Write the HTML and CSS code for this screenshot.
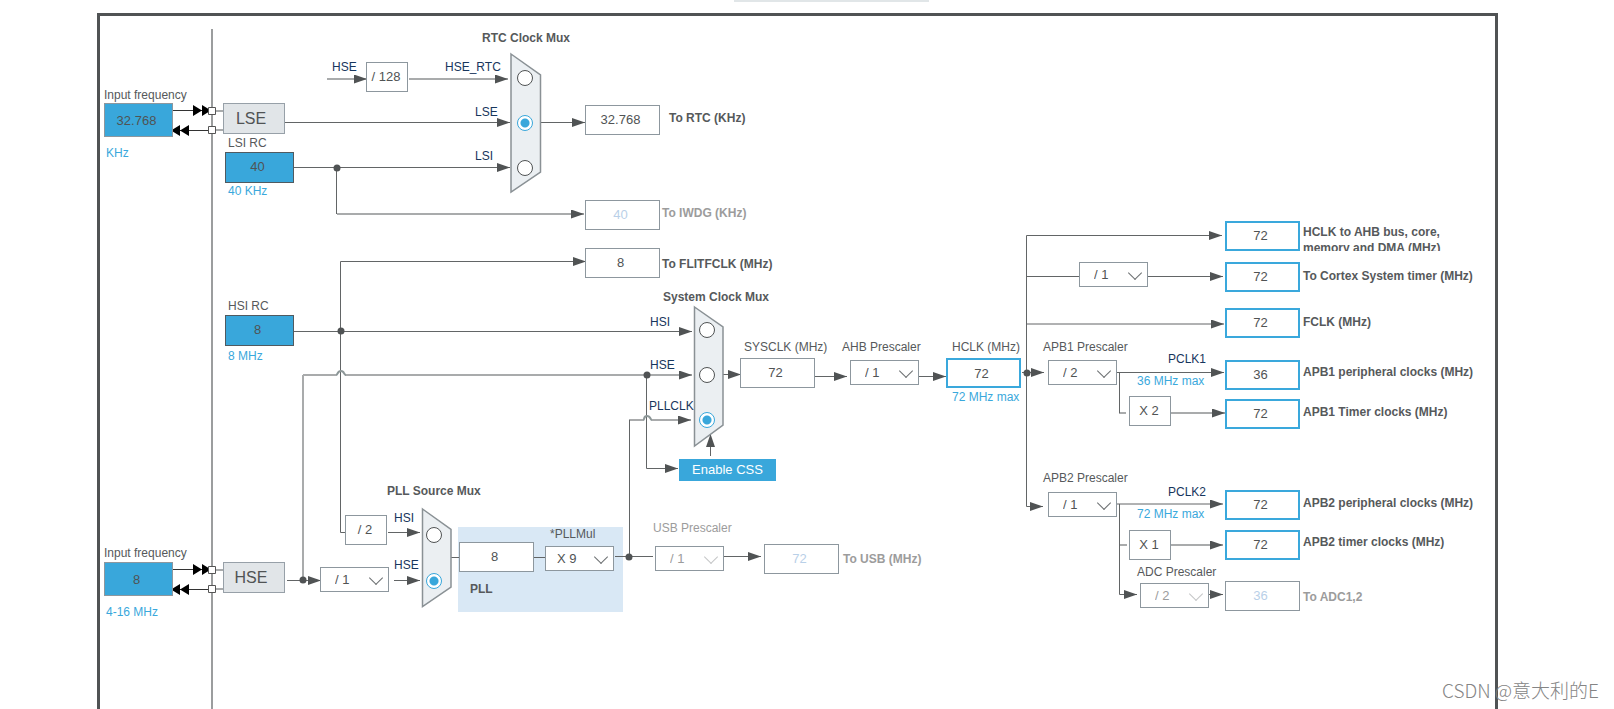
FILE: index.html
```html
<!DOCTYPE html>
<html lang="en">
<head>
<meta charset="utf-8">
<title>Clock Configuration</title>
<link rel="stylesheet" href="styles.css">
</head>
<body>
<header class="top"><div class="top-strip"></div></header>
<main class="frame">
<div class="canvas">
  <div class="pll-panel"></div>
  <svg class="wires" width="1394" height="693" viewBox="100 16 1394 693" aria-hidden="true">
    <defs>
      <marker id="head" viewBox="0 0 13 9" refX="13" refY="4.5" markerWidth="13" markerHeight="9" markerUnits="userSpaceOnUse" orient="auto">
        <path d="M0 0L13 4.5L0 9Z" fill="#505354"/>
      </marker>
    </defs>
    <path class="pin-line" d="M212 29V709"/>
    <g class="light">
      <path d="M409 79H508" marker-end="url(#head)"/>
      <path d="M337 214H584" marker-end="url(#head)"/>
      <path d="M327 79H367" marker-end="url(#head)"/>
      <path d="M303 375H336M345 375H692" marker-end="url(#head)"/>
      <path d="M629 420H643M652 420H691" marker-end="url(#head)"/>
      <path d="M1171 413H1225" marker-end="url(#head)"/>
      <path d="M1171 545H1223" marker-end="url(#head)"/>
      <path d="M1119 413H1126M1119 545H1127M303 375V580M216 111H223M216 130H223M216 570H223M216 589H223"/>
    </g>
    <g class="dark">
      <path d="M285 122.5H510" marker-end="url(#head)"/>
      <path d="M294 167.5H510" marker-end="url(#head)"/>
      <path d="M541 122.5H585" marker-end="url(#head)"/>
      <path d="M336.5 168V214"/>
      <path d="M340.5 331V261.5H586" marker-end="url(#head)"/>
      <path d="M294 331.5H692" marker-end="url(#head)"/>
      <path d="M340.5 331V532.5H345"/>
      <path d="M646.5 375V468.5H678" marker-end="url(#head)"/>
      <path d="M287 580.5H321" marker-end="url(#head)"/>
      <path d="M394 580.5H420" marker-end="url(#head)"/>
      <path d="M388 532.5H420" marker-end="url(#head)"/>
      <path d="M451 557.5H459M534 557.5H545M615 556.5H653M629.5 420V556"/>
      <path d="M723 556.5H761" marker-end="url(#head)"/>
      <path d="M710.5 456V434" marker-end="url(#head)"/>
      <path d="M723 374.5H741" marker-end="url(#head)"/>
      <path d="M815 376.5H847" marker-end="url(#head)"/>
      <path d="M919 376.5H946" marker-end="url(#head)"/>
      <path d="M1022 372.5H1044" marker-end="url(#head)"/>
      <path d="M1026.5 372V235.5H1222" marker-end="url(#head)"/>
      <path d="M1027 276.5H1079"/>
      <path d="M1147 276.5H1223" marker-end="url(#head)"/>
      <path d="M1027 324H1224" marker-end="url(#head)"/>
      <path d="M1026.5 372V506.5H1043" marker-end="url(#head)"/>
      <path d="M1116 372.5H1224" marker-end="url(#head)"/>
      <path d="M1119.5 372V413"/>
      <path d="M1116 504H1223" marker-end="url(#head)"/>
      <path d="M1119.5 504V594.5H1137" marker-end="url(#head)"/>
      <path d="M1209 594.5H1223" marker-end="url(#head)"/>
    </g>
    <g class="hop">
      <path d="M336 375C338 375 337 371 341 371C345 371 343 375 346 375"/>
      <path d="M643 420C645 420 643 416 647 416C651 416 650 420 652 420"/>
    </g>
    <g fill="#505354">
      <circle cx="337" cy="168" r="3.5"/><circle cx="341" cy="331" r="3.5"/><circle cx="647" cy="375" r="3.5"/>
      <circle cx="303" cy="580" r="3.5"/><circle cx="629" cy="557" r="3.5"/><circle cx="1027" cy="373" r="3.5"/>
    </g>
    <g class="pins">
      <path class="pin-wire" d="M172 110.5H209M172 130.5H209M172 569.5H209M172 589.5H209"/>
      <path d="M193 105L202 110.5L193 116ZM202 105L211 110.5L202 116ZM189 125L180 130.5L189 136ZM180 125L171 130.5L180 136Z"/>
      <path d="M193 564L202 569.5L193 575ZM202 564L211 569.5L202 575ZM189 584L180 589.5L189 595ZM180 584L171 589.5L180 595Z"/>
      <path class="pad" d="M208.5 107.5h7v7h-7zM208.5 126.5h7v7h-7zM208.5 566.5h7v7h-7zM208.5 585.5h7v7h-7z"/>
    </g>
    <g class="mux">
      <path d="M511 54L540.5 75V172L511 192Z"/>
      <path d="M694.5 307L723 327V425L694.5 446Z"/>
      <path d="M422.5 509L451 529.5V587L422.5 606.5Z"/>
    </g>
  </svg>

  <label class="cap c-lse-in" for="lse-in">Input frequency</label>
  <input class="box source pos-lse-in" id="lse-in" value="32.768">
  <span class="cap unit u-lse">KHz</span>
  <button class="osc pos-lse" type="button">LSE</button>
  <span class="cap c-lsi">LSI RC</span>
  <output class="box source fixed pos-lsi">40</output>
  <span class="cap unit u-lsi">40 KHz</span>
  <span class="cap c-hsi">HSI RC</span>
  <output class="box source fixed pos-hsi">8</output>
  <span class="cap unit u-hsi">8 MHz</span>
  <label class="cap c-hse-in" for="hse-in">Input frequency</label>
  <input class="box source pos-hse-in" id="hse-in" value="8">
  <span class="cap unit u-hse">4-16 MHz</span>
  <button class="osc pos-hse" type="button">HSE</button>

  <span class="cap signal s-rtc-in">HSE</span>
  <span class="box factor pos-128">/ 128</span>
  <label class="cap signal s-rtc-hse" for="rtc-hse">HSE_RTC</label>
  <label class="cap signal s-rtc-lse" for="rtc-lse">LSE</label>
  <label class="cap signal s-rtc-lsi" for="rtc-lsi">LSI</label>
  <strong class="cap c-rtc-mux">RTC Clock Mux</strong>
  <input class="dot d-rtc-1" type="radio" name="rtc" id="rtc-hse">
  <input class="dot d-rtc-2" type="radio" name="rtc" id="rtc-lse" checked>
  <input class="dot d-rtc-3" type="radio" name="rtc" id="rtc-lsi">
  <output class="box pos-rtc">32.768</output>
  <strong class="cap c-rtc">To RTC (KHz)</strong>
  <output class="box off pos-iwdg">40</output>
  <strong class="cap dim c-iwdg">To IWDG (KHz)</strong>
  <output class="box pos-flit">8</output>
  <strong class="cap c-flit">To FLITFCLK (MHz)</strong>

  <strong class="cap c-sys-mux">System Clock Mux</strong>
  <label class="cap signal s-sys-hsi" for="sys-hsi">HSI</label>
  <label class="cap signal s-sys-hse" for="sys-hse">HSE</label>
  <label class="cap signal s-sys-pll" for="sys-pll">PLLCLK</label>
  <input class="dot d-sys-1" type="radio" name="sys" id="sys-hsi">
  <input class="dot d-sys-2" type="radio" name="sys" id="sys-hse">
  <input class="dot d-sys-3" type="radio" name="sys" id="sys-pll" checked>
  <button class="css-button" type="button">Enable CSS</button>

  <strong class="cap c-pll-mux">PLL Source Mux</strong>
  <span class="box factor pos-half">/ 2</span>
  <div class="pick pos-hse-div"><select aria-label="HSE divider"><option>/ 1</option></select></div>
  <label class="cap signal s-pll-hsi" for="pll-hsi">HSI</label>
  <label class="cap signal s-pll-hse" for="pll-hse">HSE</label>
  <input class="dot d-pll-1" type="radio" name="pll" id="pll-hsi">
  <input class="dot d-pll-2" type="radio" name="pll" id="pll-hse" checked>
  <output class="box pos-pll">8</output>
  <strong class="cap c-pll">PLL</strong>
  <label class="cap c-pllmul" for="pllmul">*PLLMul</label>
  <div class="pick pos-pllmul"><select id="pllmul"><option>X 9</option></select></div>
  <label class="cap dim c-usb-div" for="usb-div">USB Prescaler</label>
  <div class="pick pick-off pos-usb-div"><select id="usb-div" disabled><option>/ 1</option></select></div>
  <output class="box off pos-usb">72</output>
  <strong class="cap dim c-usb">To USB (MHz)</strong>

  <span class="cap c-sysclk">SYSCLK (MHz)</span>
  <output class="box pos-sysclk">72</output>
  <label class="cap c-ahb" for="ahb">AHB Prescaler</label>
  <div class="pick pos-ahb"><select id="ahb"><option>/ 1</option></select></div>
  <label class="cap c-hclk" for="hclk">HCLK (MHz)</label>
  <input class="box active pos-hclk" id="hclk" value="72">
  <span class="cap unit u-hclk">72 MHz max</span>

  <div class="pick pos-cortex-div"><select aria-label="Cortex timer prescaler"><option>/ 1</option></select></div>
  <label class="cap c-apb1-div" for="apb1">APB1 Prescaler</label>
  <div class="pick pos-apb1-div"><select id="apb1"><option>/ 2</option></select></div>
  <span class="cap signal s-pclk1">PCLK1</span>
  <span class="cap unit u-pclk1">36 MHz max</span>
  <span class="box factor pos-x2">X 2</span>
  <label class="cap c-apb2-div" for="apb2">APB2 Prescaler</label>
  <div class="pick pos-apb2-div"><select id="apb2"><option>/ 1</option></select></div>
  <span class="cap signal s-pclk2">PCLK2</span>
  <span class="cap unit u-pclk2">72 MHz max</span>
  <span class="box factor pos-x1">X 1</span>
  <label class="cap c-adc-div" for="adc">ADC Prescaler</label>
  <div class="pick pick-off pos-adc-div"><select id="adc" disabled><option>/ 2</option></select></div>

  <output class="box active out o-1">72</output>
  <strong class="cap dest t-1">HCLK to AHB bus, core, memory and DMA (MHz)</strong>
  <output class="box active out o-2">72</output>
  <strong class="cap dest t-2">To Cortex System timer (MHz)</strong>
  <output class="box active out o-3">72</output>
  <strong class="cap dest t-3">FCLK (MHz)</strong>
  <output class="box active out o-4">36</output>
  <strong class="cap dest t-4">APB1 peripheral clocks (MHz)</strong>
  <output class="box active out o-5">72</output>
  <strong class="cap dest t-5">APB1 Timer clocks (MHz)</strong>
  <output class="box active out o-6">72</output>
  <strong class="cap dest t-6">APB2 peripheral clocks (MHz)</strong>
  <output class="box active out o-7">72</output>
  <strong class="cap dest t-7">APB2 timer clocks (MHz)</strong>
  <output class="box off out o-8">36</output>
  <strong class="cap dest dim t-8">To ADC1,2</strong>
</div>
</main>
<div class="watermark">CSDN @意大利的E</div>
</body>
</html>
```

FILE: styles.css
```css
* { box-sizing: border-box; }

body {
  margin: 0;
  height: 100vh;
  display: flex;
  flex-direction: column;
  overflow: hidden;
  background: #fff;
  color: #56595b;
  font-family: "Liberation Sans", Arial, "Noto Sans CJK SC", sans-serif;
  font-size: 12px;
}

.top { flex: none; height: 13px; padding-left: 734px; }
.top-strip { width: 195px; height: 2px; background: #e1e6e8; }

.frame {
  flex: 1;
  min-height: 0;
  margin: 0 116px 0 97px;
  border: 3px solid #505354;
  border-bottom: 0;
}

/* Schematic surface: nodes sit at their own coordinates */
.canvas { position: relative; height: 100%; }
.wires { position: absolute; left: 0; top: 0; }
.pll-panel { position: absolute; left: 358px; top: 511px; width: 165px; height: 85px; background: #d9e8f5; }

.wires path { fill: none; }
.wires marker path { fill: #505354; }
.pin-line { stroke: #9b9d9e; stroke-width: 2; }
.light { stroke: #a9abac; stroke-width: 2; }
.dark { stroke: #626566; stroke-width: 1; }
.hop { stroke: #8d9798; stroke-width: 2; }
.wires .pins path { fill: #000; }
.wires .pins .pin-wire { fill: none; stroke: #333; }
.wires .pins .pad { fill: #fff; stroke: #555; }
.wires .mux path { fill: #ebeff2; stroke: #8a9195; stroke-width: 1.5; }

.cap { position: absolute; line-height: 16px; white-space: nowrap; }
.signal { color: #17365d; }
.unit { color: #3aa8dc; }
.dim { color: #9c9c9c; }

.box {
  position: absolute;
  width: 75px;
  height: 30px;
  padding: 0 4px 0 0;
  border: 1px solid #8d979e;
  border-radius: 0;
  background: #fff;
  color: #505354;
  font: 13px/28px "Liberation Sans", Arial, sans-serif;
  text-align: center;
}
.active { border: 2px solid #3aa8dc; line-height: 26px; }
.off { color: #b9d0e8; }
.factor { width: 42px; padding: 0 2px 0 0; }
.source { width: 69px; height: 34px; background: #39a7db; }
.fixed { height: 31px; border-color: #505a60; }

.osc {
  position: absolute;
  width: 62px;
  height: 31px;
  padding: 0 6px 0 0;
  border: 1px solid #97a0a8;
  background: #e1e5e8;
  color: #505354;
  font: 16px/28px "Liberation Sans", Arial, sans-serif;
}

.css-button {
  position: absolute;
  left: 579px;
  top: 443px;
  width: 97px;
  height: 22px;
  padding: 0;
  border: 0;
  background: #39a7db;
  color: #fff;
  font: 13px/22px "Liberation Sans", Arial, sans-serif;
}

.pick { position: absolute; width: 69px; height: 25px; }
.pick select {
  appearance: none;
  width: 100%;
  height: 100%;
  padding: 0 0 0 14px;
  border: 1px solid #8d979e;
  border-radius: 0;
  background: #fff;
  color: #505354;
  font: 13px/22px "Liberation Sans", Arial, sans-serif;
  opacity: 1;
}
.pick::after {
  content: "";
  position: absolute;
  right: 8px;
  top: 6px;
  width: 9px;
  height: 9px;
  border: solid #6c7072;
  border-width: 0 1px 1px 0;
  transform: rotate(45deg);
  pointer-events: none;
}
.pick-off select { color: #9c9c9c; }
.pick-off::after { border-color: #c4c6c7; }
.pos-pllmul select { padding-left: 11px; }

.dot {
  appearance: none;
  position: absolute;
  width: 16px;
  height: 16px;
  margin: 0;
  border: 1px solid #505354;
  border-radius: 50%;
  background: #fff;
}
.dot:checked { border-color: #39a7db; background: radial-gradient(circle, #39a7db 0 4px, #fff 5px); }

/* Oscillators */
.c-lse-in { left: 4px; top: 71px; }
.pos-lse-in { left: 4px; top: 87px; }
.u-lse { left: 6px; top: 129px; }
.pos-lse { left: 123px; top: 87px; }
.c-lsi { left: 128px; top: 119px; }
.pos-lsi { left: 125px; top: 136px; }
.u-lsi { left: 128px; top: 167px; }
.c-hsi { left: 128px; top: 282px; }
.pos-hsi { left: 125px; top: 299px; }
.u-hsi { left: 128px; top: 332px; }
.c-hse-in { left: 4px; top: 529px; }
.pos-hse-in { left: 4px; top: 546px; }
.u-hse { left: 6px; top: 588px; }
.pos-hse { left: 123px; top: 546px; }

/* RTC */
.s-rtc-in { left: 232px; top: 43px; }
.pos-128 { left: 266px; top: 46px; }
.s-rtc-hse { left: 345px; top: 43px; }
.s-rtc-lse { left: 375px; top: 88px; }
.s-rtc-lsi { left: 375px; top: 132px; }
.c-rtc-mux { left: 382px; top: 14px; }
.d-rtc-1 { left: 417px; top: 54px; }
.d-rtc-2 { left: 417px; top: 99px; }
.d-rtc-3 { left: 417px; top: 144px; }
.pos-rtc { left: 485px; top: 89px; }
.c-rtc { left: 569px; top: 94px; }
.pos-iwdg { left: 485px; top: 184px; }
.c-iwdg { left: 562px; top: 189px; }
.pos-flit { left: 485px; top: 232px; }
.c-flit { left: 562px; top: 240px; }

/* System clock */
.c-sys-mux { left: 563px; top: 273px; }
.s-sys-hsi { left: 550px; top: 298px; }
.s-sys-hse { left: 550px; top: 341px; }
.s-sys-pll { left: 549px; top: 382px; }
.d-sys-1 { left: 599px; top: 306px; }
.d-sys-2 { left: 599px; top: 351px; }
.d-sys-3 { left: 599px; top: 396px; }
.c-sysclk { left: 644px; top: 323px; }
.pos-sysclk { left: 640px; top: 342px; }
.c-ahb { left: 742px; top: 323px; }
.pos-ahb { left: 750px; top: 344px; }
.c-hclk { left: 852px; top: 323px; }
.pos-hclk { left: 846px; top: 342px; }
.u-hclk { left: 852px; top: 373px; }

/* PLL and USB */
.c-pll-mux { left: 287px; top: 467px; }
.pos-half { left: 245px; top: 499px; }
.pos-hse-div { left: 220px; top: 551px; }
.s-pll-hsi { left: 294px; top: 494px; }
.s-pll-hse { left: 294px; top: 541px; }
.d-pll-1 { left: 326px; top: 511px; }
.d-pll-2 { left: 326px; top: 557px; }
.pos-pll { left: 359px; top: 526px; }
.c-pll { left: 370px; top: 565px; }
.c-pllmul { left: 450px; top: 510px; }
.pos-pllmul { left: 445px; top: 530px; }
.c-usb-div { left: 553px; top: 504px; }
.pos-usb-div { left: 555px; top: 530px; }
.pos-usb { left: 664px; top: 528px; }
.c-usb { left: 743px; top: 535px; }

/* Bus prescalers */
.pos-cortex-div { left: 979px; top: 246px; }
.c-apb1-div { left: 943px; top: 323px; }
.pos-apb1-div { left: 948px; top: 344px; }
.s-pclk1 { left: 1068px; top: 335px; }
.u-pclk1 { left: 1037px; top: 357px; }
.pos-x2 { left: 1029px; top: 380px; }
.c-apb2-div { left: 943px; top: 454px; }
.pos-apb2-div { left: 948px; top: 476px; }
.s-pclk2 { left: 1068px; top: 468px; }
.u-pclk2 { left: 1037px; top: 490px; }
.pos-x1 { left: 1029px; top: 514px; }
.c-adc-div { left: 1037px; top: 548px; }
.pos-adc-div { left: 1040px; top: 567px; }

/* Destinations */
.out { left: 1125px; }
.dest { left: 1203px; }
.o-1 { top: 205px; }
.o-2 { top: 246px; }
.o-3 { top: 292px; }
.o-4 { top: 344px; }
.o-5 { top: 383px; }
.o-6 { top: 474px; }
.o-7 { top: 514px; }
.o-8 { top: 565px; }
.t-1 { top: 208px; width: 160px; height: 27px; white-space: normal; overflow: hidden; }
.t-2 { top: 252px; }
.t-3 { top: 298px; }
.t-4 { top: 348px; }
.t-5 { top: 388px; }
.t-6 { top: 479px; }
.t-7 { top: 518px; }
.t-8 { top: 573px; }

.watermark {
  position: absolute;
  right: 15px;
  bottom: 5px;
  color: #858585;
  font: 300 19px/28px "Noto Sans CJK SC", sans-serif;
}
```
